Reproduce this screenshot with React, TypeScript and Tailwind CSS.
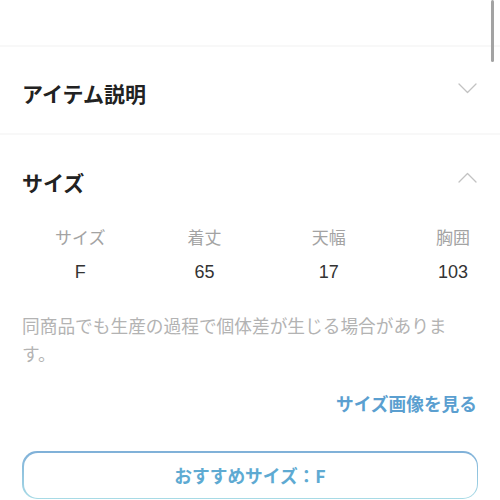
import React from "react";

const sizes = [
  { label: "サイズ", value: "F" },
  { label: "着丈", value: "65" },
  { label: "天幅", value: "17" },
  { label: "胸囲", value: "103" },
];

const Chevron: React.FC<{ up?: boolean }> = ({ up }) => (
  <svg width="19" height="11" viewBox="0 0 19 11" fill="none" className="shrink-0 mt-[4px]">
    <path
      d={up ? "M1 10L9.5 1.5L18 10" : "M1 1L9.5 9.5L18 1"}
      stroke="#c2c2c2"
      strokeWidth="1.3"
      strokeLinecap="round"
      strokeLinejoin="round"
    />
  </svg>
);

const Divider = () => <div className="h-[2px] bg-[#f8f8f8]" />;

export default function App() {
  return (
    <div
      className="relative w-[500px] h-[500px] overflow-hidden bg-white"
      style={{ fontFamily: '"Noto Sans CJK JP", "Noto Sans", sans-serif' }}
    >
      <div className="absolute right-[6px] top-0 w-[3px] h-[62px] rounded-full bg-[#a3a3a3]" />

      <div className="h-[45px]" />
      <Divider />

      <div className="flex items-start justify-between pl-[22px] pr-[23px] pt-[32px] pb-[26px]">
        <span className="text-[21px] leading-[28px] font-bold text-[#222]">アイテム説明</span>
        <Chevron />
      </div>
      <Divider />

      <div className="px-[22px]">
        <div className="flex items-start justify-between pt-[33px] pr-[1px]">
          <span className="text-[21px] leading-[28px] font-bold text-[#222]">サイズ</span>
          <Chevron up />
        </div>

        <div className="mt-[27px] flex gap-[74px] pl-[33px]">
          {sizes.map((s) => (
            <div key={s.label} className="w-[52px] flex flex-col items-center">
              <span className="text-[17px] leading-[28px] text-[#a3a3a3] whitespace-nowrap">{s.label}</span>
              <span
                className="mt-[7px] text-[18px] leading-[28px] text-[#333]"
                style={{ fontFamily: '"Liberation Sans", Arial, sans-serif' }}
              >
                {s.value}
              </span>
            </div>
          ))}
        </div>

        <p className="mt-[25px] text-[17.7px] leading-[28px] text-[#b3b3b3] pr-[20px]">
          同商品でも生産の過程で個体差が生じる場合があります。
        </p>

        <div className="mt-[22px] flex justify-end pr-[1px]">
          <span className="text-[17.7px] leading-[28px] font-bold text-[#5b9fd0]">サイズ画像を見る</span>
        </div>

        <div className="mt-[34px] rounded-[15px] p-[1.5px] bg-gradient-to-b from-[#7fb0d8] to-[#a8dbe6]">
          <div className="h-[45px] rounded-[14px] bg-white flex items-center justify-center">
            <span className="text-[17.7px] leading-[28px] font-bold text-[#5eaad2]">おすすめサイズ：F</span>
          </div>
        </div>
      </div>
    </div>
  );
}
